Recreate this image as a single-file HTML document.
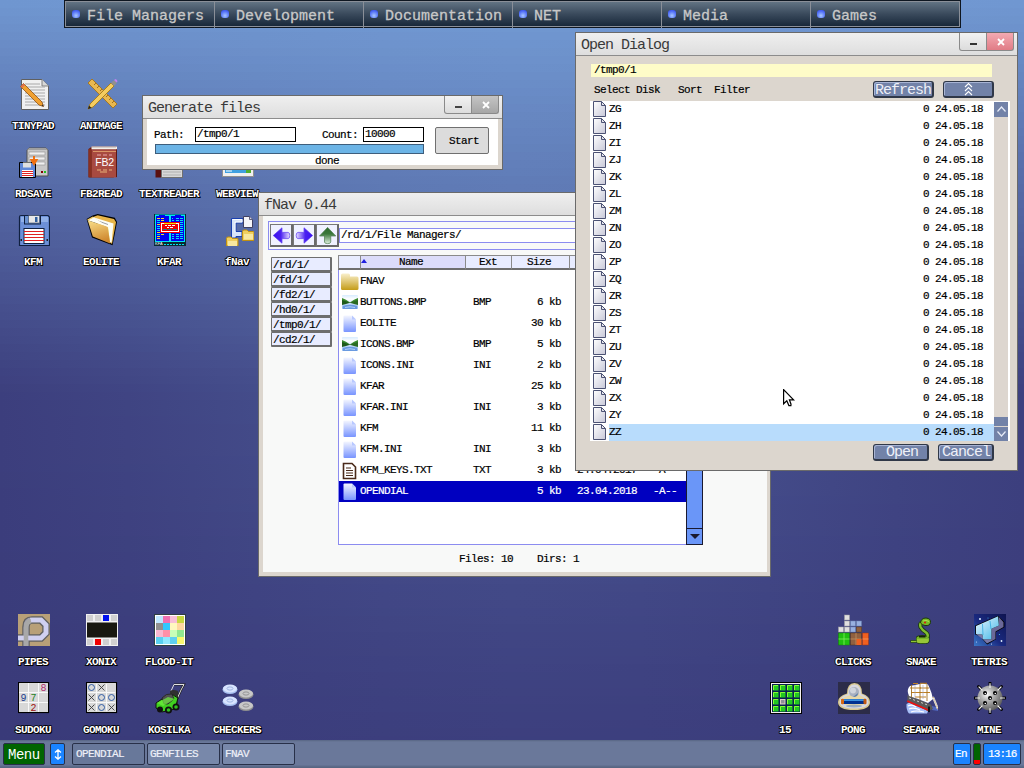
<!DOCTYPE html>
<html><head><meta charset="utf-8">
<style>
*{box-sizing:border-box;margin:0;padding:0}
html,body{width:1024px;height:768px;overflow:hidden}
body{position:relative;font-family:"Liberation Mono",monospace;background:linear-gradient(180deg,#6b90cb 0%,#5a74b4 35%,#46498c 70%,#3d3a7c 100%)}
.a{position:absolute}
/* top menu */
#topbar{left:64px;top:0;width:897px;height:28px;background:#1a2636;border:1px solid #0e1620}
#topbar .in{position:absolute;left:0;top:0;right:0;bottom:0;border:1px solid #8a8f98;background:linear-gradient(180deg,#627383 0%,#3a4a5c 50%,#18283a 100%)}
.sec{position:absolute;top:0;height:26px;border-left:1px solid #8a8f98}
.sec .dot{position:absolute;left:6px;top:8px;width:8px;height:8px;border-radius:3px;background:radial-gradient(circle at 50% 70%,#a8c8ff 0,#5a78f8 55%,#2a40e8 100%)}
.sec .t{position:absolute;left:21px;top:6px;font:15px "Liberation Mono",monospace;-webkit-text-stroke:0.3px #c8c8c8;color:#c8c8c8;letter-spacing:0px;white-space:pre}
/* labels */
.lbl{position:absolute;font:bold 11px "Liberation Mono",monospace;letter-spacing:-0.6px;color:#fff;-webkit-text-stroke:1.5px #000;paint-order:stroke fill;text-shadow:1px 1px 0 #000;white-space:pre;text-align:center;width:80px;line-height:12px}
.ico{position:absolute;width:32px;height:32px}
/* windows */
.win{position:absolute;background:#dcd6ce;border:1px solid #6a6a6a}
.ttl{position:absolute;left:0;top:0;right:0;height:23px;background:linear-gradient(180deg,#efefef,#dedede);border-bottom:1px solid #8c8c8c}
.ttl .t{position:absolute;left:5px;top:2px;font:15px "Liberation Mono",monospace;letter-spacing:-1px;color:#3a3a3a;white-space:pre}
.sys{font:11px "Liberation Mono",monospace;letter-spacing:-0.6px;-webkit-text-stroke:0.2px currentColor;white-space:pre;line-height:12px;color:#000}
/* taskbar */
#task{left:0;top:740px;width:1024px;height:28px;background:linear-gradient(180deg,#566484 0,#62708f 1px,#6a789a 2px,#6a789a 25px,#5e6c8c 26px,#56647f 28px)}
.tb{position:absolute;top:3px;height:22px;border:1px solid #283048;border-radius:2px}
.nb{position:absolute;width:23px;height:23px;background:#f0f2ff;border:1px solid #787878;border-right:2px solid #6a6a6a;border-bottom:2px solid #6a6a6a}
.db{position:absolute;left:12px;width:61px;height:15px;background:#e8ecff;border:1px solid #6e6e6e;border-bottom-width:2px;border-right-width:2px;border-radius:1px}
.hc{position:absolute;top:62px;height:15px;border:1px solid #8a8a8a;border-bottom:2px solid #6e6e6e;background:#e8ecff}
.ob{position:absolute;background:#7282a8;border:1px solid #303848;border-right-width:2px;border-bottom-width:2px;border-radius:3px;box-shadow:inset 1px 1px 0 #a8b4d4}
.bt{position:absolute;font:15px "Liberation Mono",monospace;letter-spacing:-1px;color:#eef0f8;white-space:pre;line-height:16px}
</style></head><body>

<div id="bg" style="position:absolute;left:0;top:0;width:1024px;height:768px">
<div style="height:8px;background:linear-gradient(90deg,#6f96d0 0px,#7097d1 128px,#7199d2 256px,#729ad4 384px,#739bd4 512px,#729bd4 640px,#729ad3 768px,#7198d2 896px,#7097d1 1023px)"></div>
<div style="height:8px;background:linear-gradient(90deg,#6e94ce 0px,#6f96cf 128px,#7097d1 256px,#7199d2 384px,#729ad3 512px,#7199d3 640px,#7198d2 768px,#7097d0 896px,#6f95cf 1023px)"></div>
<div style="height:8px;background:linear-gradient(90deg,#6d92cc 0px,#6e94ce 128px,#6f96cf 256px,#7097d1 384px,#7198d2 512px,#7198d1 640px,#7096d0 768px,#6f95cf 896px,#6e94cd 1023px)"></div>
<div style="height:8px;background:linear-gradient(90deg,#6c90ca 0px,#6d92cc 128px,#6e94ce 256px,#6f96d0 384px,#7097d0 512px,#7096d0 640px,#6f95cf 768px,#6e93cd 896px,#6d92cc 1023px)"></div>
<div style="height:8px;background:linear-gradient(90deg,#6b8ec8 0px,#6c90ca 128px,#6d92cc 256px,#6f94ce 384px,#6f95cf 512px,#6f95cf 640px,#6e93cd 768px,#6d91cb 896px,#6c90ca 1023px)"></div>
<div style="height:8px;background:linear-gradient(90deg,#6a8cc6 0px,#6b8ec9 128px,#6d91cb 256px,#6e93cd 384px,#6e94ce 512px,#6e93cd 640px,#6d92cc 768px,#6c90ca 896px,#6b8ec8 1023px)"></div>
<div style="height:8px;background:linear-gradient(90deg,#698ac4 0px,#6a8cc7 128px,#6c8fc9 256px,#6d92cb 384px,#6e93cc 512px,#6d92cc 640px,#6c90ca 768px,#6b8ec8 896px,#698cc6 1023px)"></div>
<div style="height:8px;background:linear-gradient(90deg,#6788c2 0px,#698ac5 128px,#6a8dc8 256px,#6c90ca 384px,#6d91cb 512px,#6c91cb 640px,#6b8fc9 768px,#6a8cc6 896px,#688ac4 1023px)"></div>
<div style="height:8px;background:linear-gradient(90deg,#6686c1 0px,#6888c3 128px,#698cc6 256px,#6b8ec9 384px,#6c90ca 512px,#6b8fc9 640px,#6a8dc7 768px,#688ac4 896px,#6788c2 1023px)"></div>
<div style="height:8px;background:linear-gradient(90deg,#6584bf 0px,#6687c1 128px,#688ac4 256px,#6a8dc7 384px,#6b8ec8 512px,#6b8ec8 640px,#698bc5 768px,#6788c2 896px,#6686c0 1023px)"></div>
<div style="height:8px;background:linear-gradient(90deg,#6482bd 0px,#6585bf 128px,#6788c3 256px,#698bc6 384px,#6a8dc7 512px,#6a8cc6 640px,#6889c4 768px,#6686c1 896px,#6583be 1023px)"></div>
<div style="height:8px;background:linear-gradient(90deg,#6380bb 0px,#6483be 128px,#6686c1 256px,#688ac4 384px,#698bc6 512px,#698ac5 640px,#6788c2 768px,#6584bf 896px,#6381bc 1023px)"></div>
<div style="height:8px;background:linear-gradient(90deg,#617eb9 0px,#6381bc 128px,#6585bf 256px,#6788c3 384px,#688ac4 512px,#6889c3 640px,#6686c1 768px,#6482bd 896px,#627fba 1023px)"></div>
<div style="height:8px;background:linear-gradient(90deg,#607cb7 0px,#627fba 128px,#6483be 256px,#6687c1 384px,#6888c3 512px,#6787c2 640px,#6584bf 768px,#6381bb 896px,#617eb9 1023px)"></div>
<div style="height:8px;background:linear-gradient(90deg,#5f7ab5 0px,#617db8 128px,#6381bc 256px,#6685c0 384px,#6787c1 512px,#6686c0 640px,#6483bd 768px,#627fba 896px,#607cb7 1023px)"></div>
<div style="height:8px;background:linear-gradient(90deg,#5e78b3 0px,#607bb7 128px,#6280bb 256px,#6584be 384px,#6686c0 512px,#6584bf 640px,#6381bc 768px,#617db8 896px,#5f7ab5 1023px)"></div>
<div style="height:8px;background:linear-gradient(90deg,#5d76b2 0px,#5f7ab5 128px,#617eb9 256px,#6482bd 384px,#6584bf 512px,#6483be 640px,#627fba 768px,#607bb6 896px,#5e78b3 1023px)"></div>
<div style="height:8px;background:linear-gradient(90deg,#5c74b0 0px,#5e78b3 128px,#617cb8 256px,#6381bc 384px,#6483be 512px,#6482bc 640px,#617eb9 768px,#5f79b5 896px,#5d76b1 1023px)"></div>
<div style="height:8px;background:linear-gradient(90deg,#5b72ae 0px,#5d76b2 128px,#607bb6 256px,#627fba 384px,#6382bc 512px,#6380bb 640px,#607cb7 768px,#5e78b3 896px,#5c74b0 1023px)"></div>
<div style="height:8px;background:linear-gradient(90deg,#5970ac 0px,#5c74b0 128px,#5f79b5 256px,#617eb9 384px,#6380bb 512px,#627fba 640px,#607bb6 768px,#5d76b2 896px,#5a72ae 1023px)"></div>
<div style="height:8px;background:linear-gradient(90deg,#586fab 0px,#5b73ae 128px,#5e78b3 256px,#617db8 384px,#627fba 512px,#617eb9 640px,#5f79b5 768px,#5c74b0 896px,#5970ac 1023px)"></div>
<div style="height:8px;background:linear-gradient(90deg,#576da9 0px,#5a71ad 128px,#5d76b2 256px,#607bb6 384px,#617eb9 512px,#607cb7 640px,#5e78b3 768px,#5b73ae 896px,#586eaa 1023px)"></div>
<div style="height:8px;background:linear-gradient(90deg,#566ba7 0px,#596fab 128px,#5c75b0 256px,#5f7ab5 384px,#607cb7 512px,#607bb6 640px,#5d76b2 768px,#5a71ad 896px,#576da9 1023px)"></div>
<div style="height:8px;background:linear-gradient(90deg,#5569a5 0px,#586daa 128px,#5b73af 256px,#5e79b4 384px,#607bb6 512px,#5f7ab5 640px,#5c75b0 768px,#596fab 896px,#566ba7 1023px)"></div>
<div style="height:8px;background:linear-gradient(90deg,#5467a4 0px,#576ca8 128px,#5a72ad 256px,#5d77b3 384px,#5f7ab5 512px,#5e78b4 640px,#5b73af 768px,#586eaa 896px,#5569a5 1023px)"></div>
<div style="height:8px;background:linear-gradient(90deg,#5365a2 0px,#566aa6 128px,#5970ac 256px,#5d76b1 384px,#5e79b4 512px,#5d77b2 640px,#5a72ae 768px,#576ca8 896px,#5467a4 1023px)"></div>
<div style="height:8px;background:linear-gradient(90deg,#5264a0 0px,#5568a5 128px,#586fab 256px,#5c75b0 384px,#5d77b3 512px,#5c76b1 640px,#5970ac 768px,#566aa7 896px,#5365a2 1023px)"></div>
<div style="height:8px;background:linear-gradient(90deg,#51629f 0px,#5467a3 128px,#586da9 256px,#5b73af 384px,#5d76b2 512px,#5c74b0 640px,#596fab 768px,#5569a5 896px,#5264a0 1023px)"></div>
<div style="height:8px;background:linear-gradient(90deg,#50609d 0px,#5365a2 128px,#576ca8 256px,#5a72ae 384px,#5c75b0 512px,#5b73af 640px,#586da9 768px,#5467a3 896px,#51629f 1023px)"></div>
<div style="height:8px;background:linear-gradient(90deg,#4f5e9b 0px,#5264a0 128px,#566aa6 256px,#5970ac 384px,#5b73af 512px,#5a72ad 640px,#576ca8 768px,#5365a2 896px,#50609d 1023px)"></div>
<div style="height:8px;background:linear-gradient(90deg,#4e5d9a 0px,#51629f 128px,#5569a5 256px,#596fab 384px,#5a72ae 512px,#5970ac 640px,#566aa7 768px,#5264a0 896px,#4f5f9b 1023px)"></div>
<div style="height:8px;background:linear-gradient(90deg,#4d5b98 0px,#50609d 128px,#5467a4 256px,#586eaa 384px,#5a71ad 512px,#586fab 640px,#5569a5 768px,#51629f 896px,#4e5d9a 1023px)"></div>
<div style="height:8px;background:linear-gradient(90deg,#4c5997 0px,#4f5f9c 128px,#5366a2 256px,#576ca8 384px,#596fab 512px,#586daa 640px,#5468a4 768px,#50619d 896px,#4d5b98 1023px)"></div>
<div style="height:8px;background:linear-gradient(90deg,#4b5895 0px,#4e5d9a 128px,#5264a1 256px,#566ba7 384px,#586eaa 512px,#576ca8 640px,#5366a2 768px,#4f5f9c 896px,#4c5997 1023px)"></div>
<div style="height:8px;background:linear-gradient(90deg,#4a5693 0px,#4d5b99 128px,#51639f 256px,#5569a6 384px,#576da9 512px,#566ba7 640px,#5265a1 768px,#4e5d9a 896px,#4b5895 1023px)"></div>
<div style="height:8px;background:linear-gradient(90deg,#495492 0px,#4c5a97 128px,#50619e 256px,#5468a4 384px,#566ba7 512px,#5569a6 640px,#5263a0 768px,#4d5c99 896px,#4a5693 1023px)"></div>
<div style="height:8px;background:linear-gradient(90deg,#485390 0px,#4b5895 128px,#50609c 256px,#5467a3 384px,#566aa6 512px,#5468a4 640px,#51619e 768px,#4c5a97 896px,#495492 1023px)"></div>
<div style="height:8px;background:linear-gradient(90deg,#47518f 0px,#4a5794 128px,#4f5e9b 256px,#5365a2 384px,#5568a5 512px,#5366a3 640px,#50609d 768px,#4b5996 896px,#485390 1023px)"></div>
<div style="height:8px;background:linear-gradient(90deg,#464f8d 0px,#495592 128px,#4e5c99 256px,#5264a0 384px,#5467a3 512px,#5365a1 640px,#4f5e9b 768px,#4a5794 896px,#47518f 1023px)"></div>
<div style="height:8px;background:linear-gradient(90deg,#454e8c 0px,#485391 128px,#4d5b98 256px,#51629f 384px,#5365a2 512px,#5263a0 640px,#4e5d9a 768px,#495593 896px,#464f8d 1023px)"></div>
<div style="height:8px;background:linear-gradient(90deg,#444c8a 0px,#47528f 128px,#4c5996 256px,#50609d 384px,#5264a0 512px,#51629e 640px,#4d5b98 768px,#495491 896px,#454e8c 1023px)"></div>
<div style="height:8px;background:linear-gradient(90deg,#434a88 0px,#46508e 128px,#4b5895 256px,#4f5f9c 384px,#51629f 512px,#50609d 640px,#4c5a97 768px,#485290 896px,#444c8a 1023px)"></div>
<div style="height:8px;background:linear-gradient(90deg,#424987 0px,#454e8c 128px,#4a5693 256px,#4e5d9a 384px,#50619d 512px,#4f5e9b 640px,#4b5895 768px,#47508e 896px,#434b89 1023px)"></div>
<div style="height:8px;background:linear-gradient(90deg,#414785 0px,#444d8b 128px,#495492 256px,#4d5c99 384px,#4f5f9c 512px,#4e5d9a 640px,#4a5694 768px,#464f8d 896px,#424987 1023px)"></div>
<div style="height:8px;background:linear-gradient(90deg,#404684 0px,#444b89 128px,#485390 256px,#4c5a97 384px,#4e5d9a 512px,#4d5b98 640px,#495592 768px,#454d8b 896px,#414786 1023px)"></div>
<div style="height:8px;background:linear-gradient(90deg,#3f4482 0px,#434a88 128px,#47518f 256px,#4b5895 384px,#4d5c99 512px,#4c5997 640px,#485391 768px,#444c8a 896px,#404684 1023px)"></div>
<div style="height:8px;background:linear-gradient(90deg,#3e4281 0px,#424886 128px,#464f8d 256px,#4a5794 384px,#4c5a97 512px,#4b5895 640px,#47518f 768px,#434a88 896px,#3f4483 1023px)"></div>
<div style="height:8px;background:linear-gradient(90deg,#3e4180 0px,#414785 128px,#454e8c 256px,#495592 384px,#4b5896 512px,#4a5694 640px,#46508e 768px,#424887 896px,#3f4381 1023px)"></div>
<div style="height:8px;background:linear-gradient(90deg,#3d407e 0px,#404584 128px,#444d8b 256px,#485491 384px,#4a5794 512px,#495592 640px,#454e8c 768px,#414785 896px,#3e4180 1023px)"></div>
<div style="height:8px;background:linear-gradient(90deg,#3c3f7e 0px,#404483 128px,#444c8a 256px,#485390 384px,#4a5693 512px,#495491 640px,#454d8b 768px,#414685 896px,#3d417f 1023px)"></div>
<div style="height:8px;background:linear-gradient(90deg,#3c3e7d 0px,#3f4482 128px,#434b89 256px,#475290 384px,#495593 512px,#485391 640px,#444d8b 768px,#404684 896px,#3d407f 1023px)"></div>
<div style="height:8px;background:linear-gradient(90deg,#3c3e7d 0px,#3f4482 128px,#434b89 256px,#47528f 384px,#495592 512px,#485390 640px,#444d8a 768px,#404584 896px,#3d407f 1023px)"></div>
<div style="height:8px;background:linear-gradient(90deg,#3c3e7d 0px,#3f4382 128px,#434b89 256px,#47518f 384px,#495492 512px,#485290 640px,#444c8a 768px,#404584 896px,#3d407e 1023px)"></div>
<div style="height:8px;background:linear-gradient(90deg,#3c3e7d 0px,#3f4382 128px,#434a88 256px,#47518f 384px,#495492 512px,#485290 640px,#444c8a 768px,#404584 896px,#3d407e 1023px)"></div>
<div style="height:8px;background:linear-gradient(90deg,#3c3e7d 0px,#3f4382 128px,#434a88 256px,#47518e 384px,#495491 512px,#475290 640px,#444c8a 768px,#404583 896px,#3d407e 1023px)"></div>
<div style="height:8px;background:linear-gradient(90deg,#3c3e7d 0px,#3f4382 128px,#434a88 256px,#47508e 384px,#485491 512px,#47528f 640px,#444c8a 768px,#404583 896px,#3d407e 1023px)"></div>
<div style="height:8px;background:linear-gradient(90deg,#3c3e7d 0px,#3f4381 128px,#434a88 256px,#46508e 384px,#485391 512px,#47518f 640px,#444b89 768px,#404583 896px,#3d3f7e 1023px)"></div>
<div style="height:8px;background:linear-gradient(90deg,#3c3e7d 0px,#3f4381 128px,#424988 256px,#46508e 384px,#485390 512px,#47518f 640px,#434b89 768px,#404583 896px,#3d3f7e 1023px)"></div>
<div style="height:8px;background:linear-gradient(90deg,#3c3e7d 0px,#3e4381 128px,#424987 256px,#464f8d 384px,#485290 512px,#47508e 640px,#434b89 768px,#404483 896px,#3d3f7e 1023px)"></div>
<div style="height:8px;background:linear-gradient(90deg,#3c3e7c 0px,#3e4281 128px,#424987 256px,#464f8d 384px,#475290 512px,#46508e 640px,#434b89 768px,#3f4483 896px,#3c3f7e 1023px)"></div>
<div style="height:8px;background:linear-gradient(90deg,#3b3e7c 0px,#3e4281 128px,#424987 256px,#454f8c 384px,#47518f 512px,#46508d 640px,#434a88 768px,#3f4482 896px,#3c3f7e 1023px)"></div>
<div style="height:8px;background:linear-gradient(90deg,#3b3d7c 0px,#3e4281 128px,#424886 256px,#454e8c 384px,#47518f 512px,#464f8d 640px,#434a88 768px,#3f4482 896px,#3c3f7e 1023px)"></div>
<div style="height:8px;background:linear-gradient(90deg,#3b3d7c 0px,#3e4280 128px,#424886 256px,#454e8b 384px,#47508e 512px,#464f8c 640px,#424988 768px,#3f4482 896px,#3c3f7e 1023px)"></div>
<div style="height:8px;background:linear-gradient(90deg,#3b3d7c 0px,#3e4280 128px,#414886 256px,#454d8b 384px,#46508d 512px,#454e8c 640px,#424987 768px,#3f4382 896px,#3c3f7e 1023px)"></div>
<div style="height:8px;background:linear-gradient(90deg,#3b3d7c 0px,#3e4180 128px,#414785 256px,#444d8a 384px,#464f8d 512px,#454d8b 640px,#424987 768px,#3f4382 896px,#3c3f7d 1023px)"></div>
<div style="height:8px;background:linear-gradient(90deg,#3b3d7c 0px,#3e4180 128px,#414785 256px,#444c8a 384px,#454e8c 512px,#454d8b 640px,#424886 768px,#3f4381 896px,#3c3f7d 1023px)"></div>
<div style="height:8px;background:linear-gradient(90deg,#3b3d7c 0px,#3e4180 128px,#414685 256px,#444b89 384px,#454e8c 512px,#444c8a 640px,#424886 768px,#3e4381 896px,#3c3e7d 1023px)"></div>
<div style="height:8px;background:linear-gradient(90deg,#3b3d7c 0px,#3d417f 128px,#404684 256px,#434b89 384px,#454d8b 512px,#444c8a 640px,#414786 768px,#3e4281 896px,#3c3e7d 1023px)"></div>
<div style="height:8px;background:linear-gradient(90deg,#3b3d7c 0px,#3d417f 128px,#404684 256px,#434a88 384px,#444d8b 512px,#434b89 640px,#414785 768px,#3e4281 896px,#3c3e7d 1023px)"></div>
<div style="height:8px;background:linear-gradient(90deg,#3b3d7b 0px,#3d407f 128px,#404584 256px,#434a88 384px,#444c8a 512px,#434b89 640px,#414685 768px,#3e4280 896px,#3c3e7d 1023px)"></div>
<div style="height:8px;background:linear-gradient(90deg,#3b3c7b 0px,#3d407f 128px,#404583 256px,#424987 384px,#444b89 512px,#434a88 640px,#404684 768px,#3e4180 896px,#3c3e7d 1023px)"></div>
<div style="height:8px;background:linear-gradient(90deg,#3b3c7b 0px,#3d407f 128px,#3f4483 256px,#424987 384px,#434b89 512px,#424987 640px,#404684 768px,#3e4180 896px,#3c3e7d 1023px)"></div>
<div style="height:8px;background:linear-gradient(90deg,#3b3c7b 0px,#3d407e 128px,#3f4482 256px,#424886 384px,#434a88 512px,#424987 640px,#404584 768px,#3d4180 896px,#3c3e7c 1023px)"></div>
<div style="height:8px;background:linear-gradient(90deg,#3b3c7b 0px,#3d3f7e 128px,#3f4382 256px,#414786 384px,#424987 512px,#424886 640px,#404583 768px,#3d417f 896px,#3b3d7c 1023px)"></div>
<div style="height:8px;background:linear-gradient(90deg,#3b3c7b 0px,#3c3f7e 128px,#3f4382 256px,#414785 384px,#424987 512px,#414786 640px,#3f4483 768px,#3d407f 896px,#3b3d7c 1023px)"></div>
<div style="height:8px;background:linear-gradient(90deg,#3a3c7b 0px,#3c3f7e 128px,#3e4381 256px,#414685 384px,#424886 512px,#414785 640px,#3f4482 768px,#3d407f 896px,#3b3d7c 1023px)"></div>
<div style="height:8px;background:linear-gradient(90deg,#3a3c7b 0px,#3c3f7d 128px,#3e4281 256px,#404684 384px,#414786 512px,#414685 640px,#3f4382 768px,#3d407f 896px,#3b3d7c 1023px)"></div>
<div style="height:8px;background:linear-gradient(90deg,#3a3c7b 0px,#3c3e7d 128px,#3e4280 256px,#404583 384px,#414785 512px,#404684 640px,#3f4381 768px,#3d407e 896px,#3b3d7c 1023px)"></div>
<div style="height:8px;background:linear-gradient(90deg,#3a3b7a 0px,#3c3e7d 128px,#3e4180 256px,#404583 384px,#404684 512px,#404584 640px,#3e4281 768px,#3d3f7e 896px,#3b3d7c 1023px)"></div>
<div style="height:8px;background:linear-gradient(90deg,#3a3b7a 0px,#3c3e7d 128px,#3e4180 256px,#3f4482 384px,#404584 512px,#404583 640px,#3e4281 768px,#3c3f7e 896px,#3b3d7c 1023px)"></div>
<div style="height:8px;background:linear-gradient(90deg,#3a3b7a 0px,#3c3e7c 128px,#3d417f 256px,#3f4382 384px,#404583 512px,#3f4483 640px,#3e4280 768px,#3c3f7e 896px,#3b3c7b 1023px)"></div>
<div style="height:8px;background:linear-gradient(90deg,#3a3b7a 0px,#3b3d7c 128px,#3d407f 256px,#3f4381 384px,#3f4483 512px,#3f4482 640px,#3e4180 768px,#3c3f7d 896px,#3b3c7b 1023px)"></div>
<div style="height:8px;background:linear-gradient(90deg,#3a3b7a 0px,#3b3d7c 128px,#3d407f 256px,#3e4281 384px,#3f4482 512px,#3f4382 640px,#3d4180 768px,#3c3e7d 896px,#3b3c7b 1023px)"></div>
<div style="height:8px;background:linear-gradient(90deg,#3a3b7a 0px,#3b3d7c 128px,#3d407e 256px,#3e4281 384px,#3f4382 512px,#3e4281 640px,#3d407f 768px,#3c3e7d 896px,#3b3c7b 1023px)"></div>
<div style="height:8px;background:linear-gradient(90deg,#3a3b7a 0px,#3b3d7c 128px,#3c3f7e 256px,#3e4180 384px,#3e4381 512px,#3e4281 640px,#3d407f 768px,#3c3e7d 896px,#3b3c7b 1023px)"></div>
<div style="height:8px;background:linear-gradient(90deg,#3a3b7a 0px,#3b3d7c 128px,#3c3f7e 256px,#3e4180 384px,#3e4281 512px,#3e4280 640px,#3d407e 768px,#3c3e7c 896px,#3b3c7b 1023px)"></div>
<div style="height:8px;background:linear-gradient(90deg,#3a3b7a 0px,#3b3c7b 128px,#3c3f7d 256px,#3d417f 384px,#3e4280 512px,#3e4180 640px,#3d3f7e 768px,#3b3d7c 896px,#3a3c7b 1023px)"></div>
<div style="height:8px;background:linear-gradient(90deg,#3a3a7a 0px,#3b3c7b 128px,#3c3e7d 256px,#3d407f 384px,#3e4180 512px,#3d417f 640px,#3c3f7e 768px,#3b3d7c 896px,#3a3c7b 1023px)"></div>
<div style="height:8px;background:linear-gradient(90deg,#3a3a79 0px,#3b3c7b 128px,#3c3e7d 256px,#3d407f 384px,#3d417f 512px,#3d407f 640px,#3c3f7e 768px,#3b3d7c 896px,#3a3c7b 1023px)"></div>
<div style="height:8px;background:linear-gradient(90deg,#3a3a79 0px,#3b3c7b 128px,#3c3e7d 256px,#3d3f7e 384px,#3d407f 512px,#3d407f 640px,#3c3e7d 768px,#3b3d7c 896px,#3a3b7a 1023px)"></div>
<div style="height:8px;background:linear-gradient(90deg,#3a3a79 0px,#3a3c7b 128px,#3b3d7c 256px,#3c3f7e 384px,#3d407f 512px,#3d3f7e 640px,#3c3e7d 768px,#3b3d7c 896px,#3a3b7a 1023px)"></div>
<div style="height:8px;background:linear-gradient(90deg,#393a79 0px,#3a3c7b 128px,#3b3d7c 256px,#3c3f7d 384px,#3d3f7e 512px,#3c3f7e 640px,#3c3e7d 768px,#3b3c7b 896px,#3a3b7a 1023px)"></div>
<div style="height:8px;background:linear-gradient(90deg,#393a79 0px,#3a3b7a 128px,#3b3d7c 256px,#3c3e7d 384px,#3c3f7e 512px,#3c3f7e 640px,#3c3e7c 768px,#3b3c7b 896px,#3a3b7a 1023px)"></div>
<div style="height:8px;background:linear-gradient(90deg,#393a79 0px,#3a3b7a 128px,#3b3d7c 256px,#3c3e7d 384px,#3c3f7d 512px,#3c3e7d 640px,#3b3d7c 768px,#3b3c7b 896px,#3a3b7a 1023px)"></div>
<div style="height:8px;background:linear-gradient(90deg,#393a79 0px,#3a3b7a 128px,#3b3d7b 256px,#3c3e7d 384px,#3c3e7d 512px,#3c3e7d 640px,#3b3d7c 768px,#3b3c7b 896px,#3a3b7a 1023px)"></div>
<div style="height:8px;background:linear-gradient(90deg,#393a79 0px,#3a3b7a 128px,#3b3c7b 256px,#3b3d7c 384px,#3c3e7d 512px,#3c3e7d 640px,#3b3d7c 768px,#3b3c7b 896px,#3a3b7a 1023px)"></div>
</div>
<svg width="0" height="0" style="position:absolute"><defs>
<linearGradient id="gd" x1="0" y1="0" x2="0" y2="1"><stop offset="0" stop-color="#faf0cc"/><stop offset="1" stop-color="#c49c18"/></linearGradient>
<linearGradient id="gb" x1="0" y1="0" x2="0" y2="1"><stop offset="0" stop-color="#d8ecff"/><stop offset="0.3" stop-color="#ffffff"/><stop offset="1" stop-color="#80b0f0"/></linearGradient>
<linearGradient id="gf" x1="0" y1="0" x2="0" y2="1"><stop offset="0" stop-color="#f4f6ff"/><stop offset="1" stop-color="#7894ff"/></linearGradient>
<linearGradient id="gp" x1="0" y1="0" x2="1" y2="1"><stop offset="0" stop-color="#ffffff"/><stop offset="1" stop-color="#c8c8d8"/></linearGradient>
</defs></svg>
<div id="topbar" class="a"><div class="in">
 <div class="sec" style="left:-1px;width:149px;border-left:none"><div class="dot" style="left:7px"></div><div class="t" style="left:22px">File Managers</div></div>
 <div class="sec" style="left:148px;width:149px"><div class="dot"></div><div class="t">Development</div></div>
 <div class="sec" style="left:297px;width:149px"><div class="dot"></div><div class="t">Documentation</div></div>
 <div class="sec" style="left:446px;width:149px"><div class="dot"></div><div class="t">NET</div></div>
 <div class="sec" style="left:595px;width:149px"><div class="dot"></div><div class="t">Media</div></div>
 <div class="sec" style="left:744px;width:149px"><div class="dot"></div><div class="t">Games</div></div>
</div></div>

<!-- ICONS -->
<div id="icons">
<svg class="ico" style="left:18px;top:78px" width="32" height="32" viewBox="0 0 32 32"><path d="M3.5 1.5H24L30.5 8V31.5H3.5Z" fill="#f0f0f0" stroke="#606060"/><path d="M24 1.5V8H30.5" fill="#d8d8d8" stroke="#808080"/>
<path d="M7 6H22M7 9H27M7 12H27M7 15H27M7 18H27M7 21H27M7 24H27M7 27H27" stroke="#a8a8a8" stroke-width="1"/>
<path d="M2.5 8.5L5.5 5.5L24 24L25.5 28.5L21 27Z" fill="#f0a030" stroke="#905010" stroke-width="0.8"/><path d="M2.5 8.5L5.5 5.5L7 7L4 10Z" fill="#e07050"/><path d="M23.5 27.8L25.5 28.5L24.8 26.5Z" fill="#303030"/></svg>
<div class="lbl" style="left:-7px;top:120px">TINYPAD</div>
<svg class="ico" style="left:86px;top:78px" width="32" height="32" viewBox="0 0 32 32"><path d="M2 5L6 1L31 26L27 30Z" fill="#e8b850" stroke="#a87820" stroke-width="1"/>
<path d="M8 7L10 5M11 10L13 8M14 13L16 11M20 19L22 17M23 22L25 20M26 25L28 23" stroke="#a07020" stroke-width="1"/>
<path d="M4 26L25 5L28 8L7 29L2 31Z" fill="#f4cc60" stroke="#a88020" stroke-width="1"/><path d="M25 5L27 3Q28.5 2 30 3.5Q31 5 30 6L28 8Z" fill="#909090"/><path d="M28 2L30.5 4.5L31.5 3.5Q31.5 1.5 29.5 1Z" fill="#c080f0"/><path d="M2 31L3 27.5L5.5 30Z" fill="#202020"/></svg>
<div class="lbl" style="left:61px;top:120px">ANIMAGE</div>
<svg class="ico" style="left:18px;top:146px" width="32" height="32" viewBox="0 0 32 32"><path d="M11 2H28L30 4V30H9V4Z" fill="#c8c8c8" stroke="#505050"/><path d="M11 2H28L30 4H9Z" fill="#a0a0a0"/>
<rect x="11" y="6" width="16" height="3" fill="#f0f0f0" stroke="#909090" stroke-width="0.6"/><rect x="11" y="11" width="16" height="3" fill="#f0f0f0" stroke="#909090" stroke-width="0.6"/><rect x="11" y="16" width="16" height="3" fill="#f0f0f0" stroke="#909090" stroke-width="0.6"/>
<rect x="23" y="25" width="2" height="2" fill="#800000"/><rect x="26" y="25" width="2" height="2" fill="#20c020"/>
<path d="M1.5 16.5H16L17.5 18V31.5H1.5Z" fill="#6088d8" stroke="#000"/><rect x="5" y="16.5" width="8" height="5" fill="#e0e0e0"/><rect x="4" y="24" width="11" height="7" fill="#fff"/><path d="M4 25.5H15M4 27.5H15M4 29.5H15" stroke="#e02020" stroke-width="1"/>
<path d="M16 10V16M13.5 14L16 18L18.5 14Z" stroke="#f07010" stroke-width="2" fill="#f0a020"/></svg>
<div class="lbl" style="left:-7px;top:188px">RDSAVE</div>
<svg class="ico" style="left:86px;top:146px" width="32" height="32" viewBox="0 0 32 32"><path d="M2.5 3L6 0.5H31V28.5L27.5 31.5H2.5Z" fill="#6a2018"/><path d="M5.5 0.5H31V3.5H5.5Z" fill="#f4f0ec"/><path d="M6 1.5H30" stroke="#c0b8b0" stroke-width="0.6"/>
<rect x="5.5" y="3.5" width="25.5" height="28" fill="#a84a40"/><path d="M2.5 3L5.5 3.5V31.5L2.5 31Z" fill="#8a3020"/><path d="M30.5 3.5V31" stroke="#601810" stroke-width="1"/><path d="M7 5.5H30" stroke="#e8a870" stroke-width="0.8"/>
<path d="M11 9H15M17 9H21M23 9H26" stroke="#f0b0b8" stroke-width="0.9"/><text x="18.5" y="20" font-family="Liberation Sans" font-size="10.5" fill="#fff" text-anchor="middle" letter-spacing="-0.3">FB2</text><path d="M11 24H15M17 24H21M23 24H26M14 26H21" stroke="#f0c080" stroke-width="0.9"/></svg>
<div class="lbl" style="left:61px;top:188px">FB2READ</div>
<svg class="ico" style="left:154px;top:146px" width="32" height="32" viewBox="0 0 32 32"><rect x="1.5" y="2" width="6" height="29.5" fill="#5a1010"/><rect x="7.5" y="2" width="21" height="29.5" fill="#d8d8d8" stroke="#707070"/><path d="M9 26H27M9 29H27" stroke="#b0b0b0"/></svg>
<div class="lbl" style="left:129px;top:188px">TEXTREADER</div>
<svg class="ico" style="left:222px;top:146px" width="32" height="32" viewBox="0 0 32 32"><rect x="0.5" y="1" width="31" height="29.5" fill="#f0f0f0" stroke="#909090"/><rect x="3" y="3" width="26" height="24" fill="#3a9ad8"/><rect x="3" y="21" width="26" height="6" fill="#40a0e0"/><rect x="4" y="23" width="6" height="3" fill="#a0d0f0"/><rect x="24" y="23" width="5" height="4" fill="#50b030"/></svg>
<div class="lbl" style="left:197px;top:188px">WEBVIEW</div>
<svg class="ico" style="left:18px;top:214px" width="32" height="32" viewBox="0 0 32 32"><path d="M1.5 3Q1.5 1.5 3 1.5H30L31.5 3V31.5H1.5Z" fill="#6c90d8" stroke="#102040" stroke-width="1.2"/><path d="M3 3H30V8H3Z" fill="#90b0e8"/>
<rect x="6.5" y="1.5" width="16" height="8.5" fill="#6890d0" stroke="#102040"/><rect x="10.5" y="1.5" width="11" height="7.5" fill="#e8e8e8" stroke="#304060" stroke-width="0.6"/><rect x="17" y="3" width="2.5" height="5" fill="#3060a0"/>
<rect x="6" y="14.5" width="20" height="15" fill="#fff" stroke="#102040"/><path d="M6 17.5H26M6 20.5H26M6 23.5H26M6 26.5H26" stroke="#e02020" stroke-width="1.2"/><rect x="2.5" y="25" width="1.5" height="2" fill="#202020"/><rect x="28.5" y="25" width="1.5" height="2" fill="#202020"/></svg>
<div class="lbl" style="left:-7px;top:256px">KFM</div>
<svg class="ico" style="left:86px;top:214px" width="32" height="32" viewBox="0 0 32 32"><defs><linearGradient id="eg" x1="0" y1="0" x2="0.3" y2="1"><stop offset="0" stop-color="#fae08a"/><stop offset="1" stop-color="#d08a30"/></linearGradient></defs>
<path d="M0.6 5L6.6 1.6L11.6 0.1L28.8 3.8L31 8L26.6 31.2L6 23.6Z" fill="#000"/>
<path d="M7 3L11.6 1.3L28 5L30 8.2L26 30L23.5 28Z" fill="#e8b448"/>
<path d="M7.4 3.2L27.5 9.6L25.6 28.5L22.8 28L21 13Z" fill="#fdfdf4"/><path d="M21.5 13.5L23.5 28.5" stroke="#e8f080" stroke-width="1.2"/><path d="M8 5.5L22 10.5" stroke="#505870" stroke-width="0.6"/>
<path d="M1.6 6.2L7.4 3.1L22 13Z" fill="#fdfdf4"/><path d="M1.2 5.4L6.8 2.4L7.8 3.5L2 6.6Z" fill="#f4cc68"/><path d="M1.7 6.2L21.8 13L24.2 29.4L6.8 22.6Z" fill="url(#eg)"/></svg>
<div class="lbl" style="left:61px;top:256px">EOLITE</div>
<svg class="ico" style="left:154px;top:214px" width="32" height="32" viewBox="0 0 32 32"><rect x="0" y="0" width="32" height="32" fill="#0a2a30"/><rect x="1" y="0.5" width="30" height="27.5" fill="#00e8f0"/><rect x="2" y="2" width="13" height="25" fill="#0000f0"/><rect x="17" y="2" width="13" height="25" fill="#0000f0"/><rect x="5" y="1" width="6" height="1" fill="#0000f0"/><rect x="21" y="1" width="6" height="1" fill="#0000f0"/><rect x="3" y="4" width="3" height="1" fill="#f0e020"/><rect x="3" y="6" width="3" height="1" fill="#00e0f0"/><rect x="3" y="8" width="3" height="1" fill="#00e0f0"/><rect x="3" y="10" width="3" height="1" fill="#f0e020"/><rect x="3" y="12" width="3" height="1" fill="#00e0f0"/><rect x="3" y="14" width="3" height="1" fill="#00e0f0"/><rect x="3" y="16" width="3" height="1" fill="#00e0f0"/><rect x="3" y="18" width="3" height="1" fill="#f0e020"/><rect x="3" y="20" width="3" height="1" fill="#00e0f0"/><rect x="3" y="22" width="3" height="1" fill="#f0e020"/><rect x="3" y="24" width="3" height="1" fill="#f0e020"/><rect x="7" y="4" width="3" height="1" fill="#f0e020"/><rect x="7" y="6" width="3" height="1" fill="#f0e020"/><rect x="7" y="20" width="3" height="1" fill="#f0e020"/><rect x="18" y="4" width="1" height="1" fill="#00e0f0"/><rect x="22" y="4" width="3" height="1" fill="#00e0f0"/><rect x="26" y="4" width="3" height="1" fill="#00e0f0"/><rect x="18" y="6" width="2" height="1" fill="#00e0f0"/><rect x="22" y="6" width="3" height="1" fill="#00e0f0"/><rect x="26" y="6" width="3" height="1" fill="#00e0f0"/><rect x="26" y="8" width="3" height="1" fill="#00e0f0"/><rect x="26" y="10" width="3" height="1" fill="#00e0f0"/><rect x="26" y="12" width="3" height="1" fill="#00e0f0"/><rect x="26" y="14" width="3" height="1" fill="#00e0f0"/><rect x="26" y="16" width="3" height="1" fill="#00e0f0"/><rect x="26" y="18" width="3" height="1" fill="#00e0f0"/><rect x="18" y="20" width="2" height="1" fill="#00e0f0"/><rect x="22" y="20" width="3" height="1" fill="#00e0f0"/><rect x="26" y="20" width="3" height="1" fill="#00e0f0"/><rect x="18" y="22" width="2" height="1" fill="#00e0f0"/><rect x="22" y="22" width="3" height="1" fill="#00e0f0"/><rect x="26" y="22" width="3" height="1" fill="#00e0f0"/><rect x="18" y="24" width="2" height="1" fill="#00e0f0"/><rect x="22" y="24" width="3" height="1" fill="#00e0f0"/><rect x="26" y="24" width="3" height="1" fill="#00e0f0"/><rect x="6" y="8" width="20" height="11" fill="#f00000"/><rect x="7.5" y="9.5" width="17" height="8" fill="none" stroke="#fff" stroke-width="1"/><rect x="10" y="9" width="12" height="1" fill="#f0e000"/><rect x="11" y="11" width="2" height="1" fill="#fff"/><rect x="14" y="11" width="3" height="1" fill="#fff"/><rect x="18" y="11" width="3" height="1" fill="#fff"/><rect x="13" y="13" width="2" height="1" fill="#fff"/><rect x="16" y="13" width="3" height="1" fill="#fff"/><rect x="9" y="15" width="4" height="1" fill="#208080"/><rect x="14" y="15" width="4" height="1" fill="#208080"/><rect x="19" y="15" width="4" height="1" fill="#208080"/><rect x="1" y="28" width="7" height="3" fill="#0a2a30"/><text x="1" y="31" font-family="Liberation Sans" font-size="4" fill="#fff">KFA</text><rect x="10" y="30" width="2" height="1" fill="#00e0f0"/><rect x="13" y="30" width="2" height="1" fill="#00e0f0"/><rect x="16" y="30" width="2" height="1" fill="#00e0f0"/><rect x="19" y="30" width="2" height="1" fill="#00e0f0"/><rect x="22" y="30" width="2" height="1" fill="#00e0f0"/><rect x="25" y="30" width="2" height="1" fill="#00e0f0"/><rect x="28" y="30" width="2" height="1" fill="#00e0f0"/></svg>
<div class="lbl" style="left:129px;top:256px">KFAR</div>
<svg class="ico" style="left:222px;top:214px" width="32" height="32" viewBox="0 0 32 32"><path d="M9.5 4.5H21V9H14V17.5H20V22.5H14V24H9.5Z" fill="#d8e4f8" stroke="#1a40b0" stroke-width="1"/><path d="M10.5 5.5H20V8H13V18.5" fill="none" stroke="#ffffff" stroke-width="1" opacity="0.8"/>
<path d="M21.5 2.5H27.5L30.5 5.5V13.5H21.5Z" fill="#f4f4f8" stroke="#404060" stroke-width="1"/><path d="M27.5 2.5V5.5H30.5" fill="#d0d0e0" stroke="#404060" stroke-width="0.8"/>
<path d="M4.5 24.5Q4.5 23 6 23H9L10.5 24.5H15Q16 24.5 16 25.5V32H4.5Z" fill="#f0d060" stroke="#c09010" stroke-width="1"/><rect x="6" y="27" width="9" height="5" fill="#f8e8a0"/>
<path d="M20.5 17.5Q20.5 16 22 16H25L26.5 17.5H31Q32 17.5 32 18.5V26.5H20.5Z" fill="#f0d060" stroke="#c09010" stroke-width="1"/><rect x="22" y="20" width="9" height="5.5" fill="#f8e8a0"/></svg>
<div class="lbl" style="left:197px;top:256px">fNav</div>
<svg class="ico" style="left:18px;top:614px" width="32" height="32" viewBox="0 0 32 32"><rect x="0" y="0" width="32" height="32" fill="#b8a078"/><path d="M8 32V13Q8 6 14 6H23L28 11V19L23 24H0" fill="none" stroke="#606060" stroke-width="7.5"/><path d="M8 32V13Q8 6 14 6H23L28 11V19L23 24H0" fill="none" stroke="#a0a0b0" stroke-width="5"/>
<path d="M12 6H23L28 11V19L23 24H0" fill="none" stroke="#d0d0f0" stroke-width="4.5"/><path d="M8 32V14Q8 8 13 7" fill="none" stroke="#a8a8a8" stroke-width="4.5"/><rect x="12" y="12" width="10" height="8" fill="#b8a078"/></svg>
<div class="lbl" style="left:-7px;top:656px">PIPES</div>
<svg class="ico" style="left:86px;top:614px" width="32" height="32" viewBox="0 0 32 32"><rect x="0" y="0" width="32" height="32" fill="#f0f0f0"/><path d="M1 1H7V7H1ZM9 1H15V7H9ZM25 1H31V7H25ZM1 25H7V31H1ZM17 25H23V31H17ZM25 25H31V31H25Z" fill="#d0d0d0"/><rect x="17" y="1" width="6" height="6" fill="#0010f0"/><rect x="9" y="25" width="6" height="6" fill="#f00000"/><rect x="1" y="8.5" width="30" height="15" fill="#181810"/></svg>
<div class="lbl" style="left:61px;top:656px">XONIX</div>
<svg class="ico" style="left:154px;top:614px" width="32" height="32" viewBox="0 0 32 32"><rect x="0.5" y="0.5" width="31" height="31" fill="#fff" stroke="#304040"/>
<rect x="2" y="2" width="7" height="7" fill="#c0e8ff"/><rect x="9" y="2" width="7" height="7" fill="#f070b0"/><rect x="16" y="2" width="7" height="7" fill="#f8c0d8"/><rect x="23" y="2" width="7" height="7" fill="#c8d840"/>
<rect x="2" y="9" width="7" height="7" fill="#909090"/><rect x="9" y="9" width="7" height="7" fill="#30c8ff"/><rect x="16" y="9" width="7" height="7" fill="#fff8c0"/><rect x="23" y="9" width="7" height="7" fill="#ffd8a0"/>
<rect x="2" y="16" width="7" height="7" fill="#f8b8d0"/><rect x="9" y="16" width="7" height="7" fill="#ff90a8"/><rect x="16" y="16" width="7" height="7" fill="#c8ffb8"/><rect x="23" y="16" width="7" height="7" fill="#90e890"/>
<rect x="2" y="23" width="7" height="7" fill="#58d0f0"/><rect x="9" y="23" width="7" height="7" fill="#90e8ff"/><rect x="16" y="23" width="7" height="7" fill="#60d0f0"/><rect x="23" y="23" width="7" height="7" fill="#f8f870"/></svg>
<div class="lbl" style="left:129px;top:656px">FLOOD-IT</div>
<svg class="ico" style="left:838px;top:614px" width="32" height="32" viewBox="0 0 32 32"><rect x="6.5" y="1" width="5" height="5" fill="#e0e0e0" stroke="#a0a0a0" stroke-width="0.5"/><rect x="6.5" y="7" width="5" height="5" fill="#e0e0e0" stroke="#a0a0a0" stroke-width="0.5"/><rect x="12.5" y="7" width="5" height="5" fill="#98b0e0" stroke="#6880b0" stroke-width="0.5"/><rect x="18.5" y="7" width="5" height="5" fill="#98b0e0" stroke="#6880b0" stroke-width="0.5"/>
<rect x="0.5" y="13" width="5" height="5" fill="#e0e0e0" stroke="#a0a0a0" stroke-width="0.5"/><rect x="6.5" y="13" width="5" height="5" fill="#e0e0e0" stroke="#a0a0a0" stroke-width="0.5"/><rect x="12.5" y="13" width="5" height="5" fill="#98b0e0" stroke="#6880b0" stroke-width="0.5"/><rect x="18.5" y="13" width="5" height="5" fill="#906040" stroke="#604020" stroke-width="0.5"/>
<rect x="0.5" y="19" width="11" height="12" fill="#20c010" stroke="#108000" stroke-width="0.5"/><path d="M6 19V31M0.5 25H11.5" stroke="#80f060" stroke-width="0.8"/><rect x="12.5" y="19" width="11" height="12" fill="#906040" stroke="#503010" stroke-width="0.5"/><path d="M18 19V31M12.5 25H23.5" stroke="#c09060" stroke-width="0.8"/><rect x="24.5" y="19" width="6" height="12" fill="#f06020" stroke="#a03010" stroke-width="0.5"/><rect x="18.5" y="25" width="5" height="6" fill="#f06020"/><path d="M24.5 25H30.5" stroke="#f8a060" stroke-width="0.8"/></svg>
<div class="lbl" style="left:813px;top:656px">CLICKS</div>
<svg class="ico" style="left:906px;top:614px" width="32" height="32" viewBox="0 0 32 32"><path d="M10 23.5Q10 21 16.5 21Q23.5 21 23.5 23.5V27.5Q23.5 30 16.5 30Q10 30 10 27.5Z" fill="#1a3a08"/>
<path d="M10.5 24Q10.5 22 16.5 22Q23 22 23 24V27Q23 29.3 16.5 29.3Q10.5 29.3 10.5 27Z" fill="#78b828"/><path d="M11 26H22.5M11 28H22" stroke="#c8e050" stroke-width="0.8"/><path d="M13 22.8H19.5" stroke="#000" stroke-width="1.2"/>
<path d="M4.5 27.5H10.5" stroke="#1a3a08" stroke-width="2.6"/><path d="M5 27.5H10.5" stroke="#90c830" stroke-width="1.4"/>
<path d="M15.5 8.5Q13.5 10 14.5 13Q16 16 20 18.5Q22.5 20.5 21.5 23" fill="none" stroke="#1a3a08" stroke-width="4"/><path d="M15.5 8.5Q13.5 10 14.5 13Q16 16 20 18.5Q22.5 20.5 21.5 23" fill="none" stroke="#80c030" stroke-width="2.4"/>
<path d="M14.5 9Q15 4 20 4Q25 4.5 24.5 8.5Q24 12 19 11.5Q16 11 14.5 9Z" fill="#78b828" stroke="#1a3a08" stroke-width="1"/><path d="M17 7Q20 5.5 23 7.5" stroke="#b0e050" stroke-width="1" fill="none"/><circle cx="19" cy="8.5" r="1" fill="#e01010"/></svg>
<div class="lbl" style="left:881px;top:656px">SNAKE</div>
<svg class="ico" style="left:974px;top:614px" width="32" height="32" viewBox="0 0 32 32"><defs><linearGradient id="tbg" x1="0" y1="1" x2="1" y2="0"><stop offset="0" stop-color="#3a78c8"/><stop offset="0.45" stop-color="#1a2a80"/><stop offset="1" stop-color="#0e1450"/></linearGradient><linearGradient id="tfc" x1="0" y1="0" x2="1" y2="1"><stop offset="0" stop-color="#f0f8ff"/><stop offset="1" stop-color="#40b8e8"/></linearGradient></defs>
<rect x="0" y="0" width="32" height="32" fill="url(#tbg)"/><circle cx="6" cy="5" r="1" fill="#e0f0ff"/><circle cx="27.5" cy="27" r="0.9" fill="#e0f0ff"/><circle cx="2.5" cy="28" r="0.6" fill="#c0d8ff"/><circle cx="25.5" cy="20.5" r="0.6" fill="#40c0f0"/><circle cx="17.5" cy="30" r="0.5" fill="#fff"/><circle cx="14" cy="4" r="0.5" fill="#40c0f0"/>
<path d="M1.2 11.6L24.1 1.7L30.4 8V13.2L22 17.9V25.2L13.2 30.4L8.5 25.2V23L1.2 20.5Z" fill="#000"/>
<path d="M24.9 3L29.5 8.3V13L24.9 11.6ZM17.4 14.75L24.9 11.6L29.5 13L21.5 17.5V25L17.4 25.2Z" fill="#6a6898"/><path d="M2 20L8.5 20.5L9 25.2L13 29.5L21.5 25L17.4 25.2L9 25.2" fill="#7a78a8"/>
<path d="M2 12.1L24.1 2.3L24.9 11.6L17.4 14.75V25.2H9L8.5 20.5L2 20Z" fill="url(#tfc)"/><path d="M8.5 10L9 21M16 7L17 15" stroke="#30a8e0" stroke-width="0.8"/></svg>
<div class="lbl" style="left:949px;top:656px">TETRIS</div>
<svg class="ico" style="left:18px;top:682px" width="32" height="32" viewBox="0 0 32 32"><rect x="0.5" y="0.5" width="30" height="30" fill="#f8f8f8" stroke="#000" stroke-width="1.2"/><path d="M1 10.5H30M1 20.5H30M10.5 1V30M20.5 1V30" stroke="#f8f8f8"/>
<rect x="1.5" y="1.5" width="8.5" height="8.5" fill="#d8d8d8"/><rect x="11" y="1.5" width="9" height="8.5" fill="#d8d8d8"/><rect x="21" y="1.5" width="9" height="8.5" fill="#d8d8d8"/><rect x="1.5" y="11" width="8.5" height="9" fill="#d8d8d8"/><rect x="11" y="11" width="9" height="9" fill="#d8d8d8"/><rect x="21" y="11" width="9" height="9" fill="#d8d8d8"/><rect x="1.5" y="21" width="8.5" height="9" fill="#d8d8d8"/><rect x="11" y="21" width="9" height="9" fill="#d8d8d8"/><rect x="21" y="21" width="9" height="9" fill="#d8d8d8"/>
<text x="25.5" y="9" font-family="Liberation Mono" font-size="10" fill="#b03070" text-anchor="middle">8</text><text x="5.5" y="19" font-family="Liberation Mono" font-size="10" fill="#204090" text-anchor="middle">9</text><text x="15.5" y="19" font-family="Liberation Mono" font-size="10" fill="#208020" text-anchor="middle">7</text><text x="15.5" y="29" font-family="Liberation Mono" font-size="10" fill="#a01010" text-anchor="middle">2</text></svg>
<div class="lbl" style="left:-7px;top:724px">SUDOKU</div>
<svg class="ico" style="left:86px;top:682px" width="32" height="32" viewBox="0 0 32 32"><rect x="0.5" y="0.5" width="30" height="30" fill="#f8f8f8" stroke="#000" stroke-width="1.2"/>
<rect x="1.5" y="1.5" width="8.5" height="8.5" fill="#d8d8d8"/><rect x="11" y="1.5" width="9" height="8.5" fill="#d8d8d8"/><rect x="21" y="1.5" width="9" height="8.5" fill="#d8d8d8"/><rect x="1.5" y="11" width="8.5" height="9" fill="#d8d8d8"/><rect x="11" y="11" width="9" height="9" fill="#d8d8d8"/><rect x="21" y="11" width="9" height="9" fill="#d8d8d8"/><rect x="1.5" y="21" width="8.5" height="9" fill="#d8d8d8"/><rect x="11" y="21" width="9" height="9" fill="#d8d8d8"/><rect x="21" y="21" width="9" height="9" fill="#d8d8d8"/>
<circle cx="5.5" cy="5.5" r="3" fill="none" stroke="#2050a0" stroke-width="0.9"/><circle cx="15.5" cy="15.5" r="3" fill="none" stroke="#2050a0" stroke-width="0.9"/><circle cx="25.5" cy="15.5" r="3" fill="none" stroke="#2050a0" stroke-width="0.9"/><circle cx="15.5" cy="25.5" r="3" fill="none" stroke="#2050a0" stroke-width="0.9"/>
<path d="M12.5 2.5L18.5 8.5M18.5 2.5L12.5 8.5M2.5 12.5L8.5 18.5M8.5 12.5L2.5 18.5M2.5 22.5L8.5 28.5M8.5 22.5L2.5 28.5M22.5 22.5L28.5 28.5M28.5 22.5L22.5 28.5" stroke="#404040" stroke-width="0.9"/></svg>
<div class="lbl" style="left:61px;top:724px">GOMOKU</div>
<svg class="ico" style="left:154px;top:682px" width="32" height="32" viewBox="0 0 32 32"><path d="M20 2.5H30L27 8L19 26" fill="none" stroke="#202020" stroke-width="2.2"/><path d="M20 2.5H30L27 8L19 26M20 2.5L17 9" fill="none" stroke="#e0e0e0" stroke-width="1"/>
<path d="M16 9Q19 7 24 9V24H16Z" fill="#303030"/><path d="M2 21L14 13Q20 12 24 16L21 27L8 30L2 26Z" fill="#40d020" stroke="#101010" stroke-width="1"/><path d="M8 16Q12 11 18 12L20 17L14 22L10 22Z" fill="#505050" stroke="#202020" stroke-width="0.8"/>
<path d="M3 21L14 15L21 17L9 24Z" fill="#70f040" opacity="0.7"/><circle cx="6" cy="27.5" r="3" fill="#101010"/><circle cx="14.5" cy="28" r="3.5" fill="#101010"/><circle cx="14.5" cy="28" r="1.8" fill="#30c020"/><circle cx="22" cy="25" r="3.5" fill="#101010"/><circle cx="22" cy="25" r="1.8" fill="#30c020"/></svg>
<div class="lbl" style="left:129px;top:724px">KOSILKA</div>
<svg class="ico" style="left:222px;top:682px" width="32" height="32" viewBox="0 0 32 32"><ellipse cx="8" cy="7.5" rx="7.5" ry="4.5" fill="#a8c0f0"/><ellipse cx="8" cy="6.5" rx="7" ry="4" fill="#d8e4ff"/><ellipse cx="8" cy="6.5" rx="3" ry="1.6" fill="none" stroke="#90a8d8" stroke-width="0.8"/>
<ellipse cx="8" cy="19.5" rx="7.5" ry="4.5" fill="#a8c0f0"/><ellipse cx="8" cy="18.5" rx="7" ry="4" fill="#d8e4ff"/><ellipse cx="8" cy="18.5" rx="3" ry="1.6" fill="none" stroke="#90a8d8" stroke-width="0.8"/>
<ellipse cx="24" cy="12.5" rx="7.5" ry="4.5" fill="#909090"/><ellipse cx="24" cy="11.5" rx="7" ry="4" fill="#c8c8c8"/><ellipse cx="24" cy="11.5" rx="3" ry="1.6" fill="none" stroke="#888" stroke-width="0.8"/>
<ellipse cx="24" cy="24.5" rx="7.5" ry="4.5" fill="#909090"/><ellipse cx="24" cy="23.5" rx="7" ry="4" fill="#c8c8c8"/><ellipse cx="24" cy="23.5" rx="3" ry="1.6" fill="none" stroke="#888" stroke-width="0.8"/></svg>
<div class="lbl" style="left:197px;top:724px">CHECKERS</div>
<svg class="ico" style="left:770px;top:682px" width="32" height="32" viewBox="0 0 32 32"><rect x="0.5" y="0.5" width="31" height="31" fill="#0a1830" stroke="#000" stroke-width="1"/><rect x="1.5" y="1.5" width="29" height="29" fill="#0a2050" stroke="#f4f0f0" stroke-width="1"/><rect x="3" y="3" width="5.5" height="5.5" fill="#22c822"/><path d="M3.5 8V3.5 H8" stroke="#88ff30" stroke-width="1" fill="none"/><rect x="10" y="3" width="5.5" height="5.5" fill="#22c822"/><path d="M10.5 8V3.5 H15" stroke="#88ff30" stroke-width="1" fill="none"/><rect x="17" y="3" width="5.5" height="5.5" fill="#22c822"/><path d="M17.5 8V3.5 H22" stroke="#88ff30" stroke-width="1" fill="none"/><rect x="24" y="3" width="5.5" height="5.5" fill="#22c822"/><path d="M24.5 8V3.5 H29" stroke="#88ff30" stroke-width="1" fill="none"/><rect x="3" y="10" width="5.5" height="5.5" fill="#22c822"/><path d="M3.5 15V10.5 H8" stroke="#88ff30" stroke-width="1" fill="none"/><rect x="10" y="10" width="5.5" height="5.5" fill="#22c822"/><path d="M10.5 15V10.5 H15" stroke="#88ff30" stroke-width="1" fill="none"/><rect x="17" y="10" width="5.5" height="5.5" fill="#22c822"/><path d="M17.5 15V10.5 H22" stroke="#88ff30" stroke-width="1" fill="none"/><rect x="24" y="10" width="5.5" height="5.5" fill="#22c822"/><path d="M24.5 15V10.5 H29" stroke="#88ff30" stroke-width="1" fill="none"/><rect x="3" y="17" width="5.5" height="5.5" fill="#22c822"/><path d="M3.5 22V17.5 H8" stroke="#88ff30" stroke-width="1" fill="none"/><rect x="10.5" y="17.5" width="4.5" height="4.5" fill="#909098" stroke="#e0d0c8" stroke-width="1"/><rect x="17" y="17" width="5.5" height="5.5" fill="#22c822"/><path d="M17.5 22V17.5 H22" stroke="#88ff30" stroke-width="1" fill="none"/><rect x="24" y="17" width="5.5" height="5.5" fill="#22c822"/><path d="M24.5 22V17.5 H29" stroke="#88ff30" stroke-width="1" fill="none"/><rect x="3" y="24" width="5.5" height="5.5" fill="#22c822"/><path d="M3.5 29V24.5 H8" stroke="#88ff30" stroke-width="1" fill="none"/><rect x="10" y="24" width="5.5" height="5.5" fill="#22c822"/><path d="M10.5 29V24.5 H15" stroke="#88ff30" stroke-width="1" fill="none"/><rect x="17" y="24" width="5.5" height="5.5" fill="#22c822"/><path d="M17.5 29V24.5 H22" stroke="#88ff30" stroke-width="1" fill="none"/><rect x="24" y="24" width="5.5" height="5.5" fill="#22c822"/><path d="M24.5 29V24.5 H29" stroke="#88ff30" stroke-width="1" fill="none"/></svg>
<div class="lbl" style="left:745px;top:724px">15</div>
<svg class="ico" style="left:838px;top:682px" width="32" height="32" viewBox="0 0 32 32"><rect x="0" y="0" width="32" height="32" fill="#2c2c48"/>
<path d="M9 11.5Q9 1 16.5 1Q24 1 24 11.5Q32 14 32 20Q32 28 16 28Q0 28 0 20Q0 14 9 11.5Z" fill="#d8c890"/><path d="M10 12Q10 2.5 16.5 2.5Q23 2.5 23 12Q30.5 14.5 30.5 20Q30.5 26.5 16 26.5Q1.5 26.5 1.5 20Q1.5 14.5 10 12Z" fill="#d8d8e0"/>
<path d="M12 13Q12 5 16.5 5Q21 5 21 13Q28 15 28 19Q28 24 16 24Q4 24 4 19Q4 15 12 13Z" fill="#f0d890" opacity="0.7"/><circle cx="16" cy="10" r="5" fill="#a8b0c0"/><circle cx="15" cy="8.5" r="3" fill="#d0d4dc"/><path d="M15 15Q20 15 20 11" fill="#6080a8"/>
<rect x="3.5" y="17" width="24.5" height="5" rx="1" fill="#003090"/><rect x="4" y="17.2" width="23.5" height="1.8" fill="#3a90e0"/><rect x="3" y="16.8" width="3" height="5.4" rx="1.2" fill="#d86810"/><rect x="25.5" y="16.8" width="3" height="5.4" rx="1.2" fill="#c05810"/>
<ellipse cx="16" cy="24" rx="8" ry="1.5" fill="#7090b8" opacity="0.6"/></svg>
<div class="lbl" style="left:813px;top:724px">PONG</div>
<svg class="ico" style="left:906px;top:682px" width="32" height="32" viewBox="0 0 32 32"><path d="M0.5 22Q4 19 9 22Q13 24 17 25L22 29.5L21 31.5H3Q0 28 0.5 22Z" fill="#a8c0f8"/><path d="M2 24Q6 22 10 25M3 27Q8 25 14 28M5 30Q10 28 18 30" stroke="#fff" stroke-width="1.2" fill="none"/>
<path d="M26 24L32 25.5V29L26 28Z" fill="#5a78d8" opacity="0.7"/>
<path d="M1.5 13L25 22.5L27 27L22 29L1.5 20Z" fill="#5a5a5a"/><path d="M1.2 19L22 28" stroke="#f01010" stroke-width="1.6"/><path d="M3 16L5 16.7M7 17.5L9 18.3M11 19L13 19.8M15 20.5L17 21.3M19 22L21 22.8" stroke="#c8c8c8" stroke-width="1"/><path d="M23 24.5V30" stroke="#000" stroke-width="1.5"/>
<path d="M2 11Q1 7 4 4L9 3L16 1.5L22 2.5L24 7L25.5 11L27 17L22 21L12 17L3 14Z" fill="#fff"/><path d="M27 15L32 27" stroke="#f0f0f0" stroke-width="2"/><path d="M27 15L32 27" stroke="#b07820" stroke-width="0.8" stroke-dasharray="1 1"/>
<path d="M7 1.5H12M14 1.3H21M4 6H15M14 6H23M5 10.5H16M15 10.5H24M9 15H20" stroke="#c08020" stroke-width="1"/><path d="M5.5 3V15M14 2V18M21 2.5V19" stroke="#a07020" stroke-width="0.9"/><path d="M9 3V15M17 3V17" stroke="#a0a0b0" stroke-width="0.6"/></svg>
<div class="lbl" style="left:881px;top:724px">SEAWAR</div>
<svg class="ico" style="left:974px;top:682px" width="32" height="32" viewBox="0 0 32 32"><defs><radialGradient id="mg" cx="0.38" cy="0.35" r="0.7"><stop offset="0" stop-color="#ffffff"/><stop offset="0.35" stop-color="#b8b8b8"/><stop offset="1" stop-color="#585858"/></radialGradient></defs>
<path d="M16 0.5V5M16 27V31.5M0.5 16H5M27 16H31.5M4.5 4.5L8 8M24 24L27.5 27.5M27.5 4.5L24 8M4.5 27.5L8 24" stroke="#000" stroke-width="2.8" stroke-linecap="round"/>
<circle cx="16" cy="16" r="12.5" fill="url(#mg)"/>
<path d="M16 1.5V5.5M16 26.5V30.5M1.5 16H5.5M26.5 16H30.5M5 5L8 8M24 24L27 27M27 5L24 8M5 27L8 24" stroke="#f0f0f0" stroke-width="1.2" stroke-linecap="round"/>
<g fill="#000"><circle cx="11" cy="11" r="2"/><circle cx="21" cy="11" r="2"/><circle cx="16" cy="16" r="2"/><circle cx="11" cy="21" r="2"/><circle cx="21" cy="21" r="2"/></g><g fill="#fff"><circle cx="11.3" cy="11.5" r="0.8"/><circle cx="21.3" cy="11.5" r="0.8"/><circle cx="16.3" cy="16.5" r="0.8"/><circle cx="11.3" cy="21.5" r="0.8"/><circle cx="21.3" cy="21.5" r="0.8"/></g></svg>
<div class="lbl" style="left:949px;top:724px">MINE</div>
</div>

<!-- Generate files window -->
<div class="win" id="gen" style="left:142px;top:95px;width:361px;height:75px">
 <div class="ttl"><div class="t" style="left:5px;top:4px">Generate files</div>
  <div class="a" style="left:301px;top:0;width:28px;height:18px;background:linear-gradient(#f2f2f2,#dcdcdc);border:1px solid #8a8a8a;border-top:none;border-radius:0 0 0 3px"><div class="a" style="left:10px;top:10px;width:7px;height:2px;background:#444"></div></div>
  <div class="a" style="left:328px;top:0;width:28px;height:18px;background:linear-gradient(#c4c4c4,#a6a6a6);border:1px solid #8a8a8a;border-top:none;border-radius:0 0 3px 0"><svg class="a" style="left:10px;top:5px" width="8" height="8"><path d="M1 1L7 7M7 1L1 7" stroke="#fff" stroke-width="1.8"/></svg></div>
 </div>
 <div class="a" style="left:4px;top:23px;width:351px;height:46px;background:#fff">
  <div class="sys a" style="left:7px;top:10px">Path:</div>
  <div class="a" style="left:48px;top:8px;width:101px;height:15px;border:1px solid #000;background:#fff"><div class="sys a" style="left:1px;top:0px">/tmp0/1</div></div>
  <div class="sys a" style="left:175px;top:10px">Count:</div>
  <div class="a" style="left:216px;top:8px;width:61px;height:15px;border:1px solid #000;background:#fff"><div class="sys a" style="left:1px;top:0px">10000</div></div>
  <div class="a" style="left:8px;top:25px;width:269px;height:10px;background:#6cb4e6;border:1px solid #3e5e7c"></div>
  <div class="sys a" style="left:168px;top:36px">done</div>
  <div class="a" style="left:288px;top:8px;width:54px;height:27px;background:#dcdcdc;border:1px solid #707070;border-radius:2px"><div class="sys a" style="left:13px;top:7px">Start</div></div>
 </div>
</div>
<!-- fNav -->
<div class="win" id="fnav" style="left:258px;top:192px;width:513px;height:385px">
 <div class="ttl"><div class="t" style="left:5px;top:4px">fNav 0.44</div></div>
 <div class="a" style="left:4px;top:23px;width:504px;height:356px;background:#f8f9f8"></div>
 <div class="a" style="left:9px;top:28px;width:500px;height:29px;border:1px solid #8c8cf0;border-right:none"></div>
 <div class="nb a" style="left:11px;top:31px"><svg width="21" height="21"><defs><linearGradient id="ga" x1="0" y1="0" x2="1" y2="0"><stop offset="0" stop-color="#3a10f0"/><stop offset="0.45" stop-color="#4a20f0"/><stop offset="1" stop-color="#e8e0ff"/></linearGradient></defs><path d="M2.25 10.5L11 2.8V7.4H17Q18.8 7.4 18.8 10.5Q18.8 13.6 17 13.6H11V18.2Z" fill="url(#ga)" stroke="#5a38f0" stroke-width="0.7"/></svg></div>
 <div class="nb a" style="left:34px;top:31px"><svg width="21" height="21"><defs><linearGradient id="ga2" x1="1" y1="0" x2="0" y2="0"><stop offset="0" stop-color="#3a10f0"/><stop offset="0.45" stop-color="#4a20f0"/><stop offset="1" stop-color="#e8e0ff"/></linearGradient></defs><path d="M18.6 10.5L10 2.8V7.4H4Q2.2 7.4 2.2 10.5Q2.2 13.6 4 13.6H10V18.2Z" fill="url(#ga2)" stroke="#5a38f0" stroke-width="0.7"/></svg></div>
 <div class="nb a" style="left:57px;top:31px"><svg width="21" height="21"><defs><linearGradient id="gu" x1="0" y1="0" x2="0" y2="1"><stop offset="0" stop-color="#2e6a2e"/><stop offset="0.4" stop-color="#3a783a"/><stop offset="1" stop-color="#e0f0e0"/></linearGradient></defs><path d="M10.6 2.4L18.75 11H13.75V17Q13.75 18.6 10.6 18.6Q7.5 18.6 7.5 17V11H2.5Z" fill="url(#gu)" stroke="#4a7a4a" stroke-width="0.7"/></svg></div>
 <div class="a" style="left:80px;top:35px;width:430px;height:15px;border:1px solid #8c8cf0;border-right:none;background:#fff"><div class="sys a" style="left:1px;top:0px">/rd/1/File Managers/</div><div class="sys a" style="left:238px;top:4px">24.04.2017</div><div class="sys a" style="left:314px;top:4px">-A--</div></div>
 <div class="db a" style="top:64px"><div class="sys a" style="left:1px;top:1px">/rd/1/</div></div>
 <div class="db a" style="top:79px"><div class="sys a" style="left:1px;top:1px">/fd/1/</div></div>
 <div class="db a" style="top:94px"><div class="sys a" style="left:1px;top:1px">/fd2/1/</div></div>
 <div class="db a" style="top:109px"><div class="sys a" style="left:1px;top:1px">/hd0/1/</div></div>
 <div class="db a" style="top:124px"><div class="sys a" style="left:1px;top:1px">/tmp0/1/</div></div>
 <div class="db a" style="top:139px"><div class="sys a" style="left:1px;top:1px">/cd2/1/</div></div>
 <div class="a" style="left:79px;top:62px;width:430px;height:15px;background:#e8ecff;border-top:1px solid #909090;border-bottom:2px solid #707070"></div>
 <div class="hc a" style="left:79px;width:23px"></div>
 <div class="hc a" style="left:101px;width:106px;background:#dcdcfa"><svg class="a" style="left:0px;top:3px" width="6" height="4"><path d="M0 4L3 0L6 4Z" fill="#2020e0"/></svg><div class="sys a" style="left:38px;top:0px">Name</div></div>
 <div class="hc a" style="left:206px;width:47px"><div class="sys a" style="left:13px;top:0px">Ext</div></div>
 <div class="hc a" style="left:252px;width:59px"><div class="sys a" style="left:15px;top:0px">Size</div></div>
 <div class="hc a" style="left:310px;width:200px"></div>
 <div class="a" style="left:79px;top:77px;width:349px;height:275px;border-left:1px solid #8c8cf0;border-bottom:1px solid #8c8cf0;background:#fff"></div>
 <div class="a" style="left:80px;top:78px;width:347px;height:21px;"><svg class="a" style="left:2px;top:2px" width="18" height="18"><path d="M0 2Q0 0.5 1.5 0.5H7.5Q9 0.5 9 2V3.5H16Q17.5 3.5 17.5 5V15.5Q17.5 17 16 17H1.5Q0 17 0 15.5Z" fill="url(#gd)"/></svg><div class="sys a" style="left:21px;top:4px;color:#000">FNAV</div><div class="sys a" style="left:134px;top:4px;color:#000"></div><div class="sys a" style="left:190px;top:4px;width:32px;text-align:right;color:#000"></div><div class="sys a" style="left:238px;top:4px">24.04.2017</div><div class="sys a" style="left:314px;top:4px">-A--</div></div>
 <div class="a" style="left:80px;top:99px;width:347px;height:21px;"><svg class="a" style="left:3px;top:3px" width="16" height="15"><rect x="0" y="0" width="16" height="14" rx="1" fill="url(#gb)"/><path d="M0 3Q4 4 8 7.5Q12 4 16 3V8.5Q12 7.5 8 8Q4 7.5 0 8.5Z" fill="#3a8a30"/><path d="M0 5Q4 6 8 7.8Q4 9 0 10Z" fill="#1e5a1a"/><path d="M16 5Q12 6 8 7.8Q12 9 16 10Z" fill="#2a6a22"/><path d="M1 11Q8 8.5 15 11V14H1Z" fill="#6a9ae0"/><path d="M3 12.5Q8 11 13 12.5" stroke="#c8e0ff" stroke-width="0.8" fill="none"/></svg><div class="sys a" style="left:21px;top:4px;color:#000">BUTTONS.BMP</div><div class="sys a" style="left:134px;top:4px;color:#000">BMP</div><div class="sys a" style="left:190px;top:4px;width:32px;text-align:right;color:#000">6 kb</div><div class="sys a" style="left:238px;top:4px">24.04.2017</div><div class="sys a" style="left:314px;top:4px">-A--</div></div>
 <div class="a" style="left:80px;top:120px;width:347px;height:21px;"><svg class="a" style="left:4px;top:2px" width="14" height="18"><path d="M0.5 1.5Q0.5 0.5 1.5 0.5H9L13 4.5V16Q13 17 12 17H1.5Q0.5 17 0.5 16Z" fill="url(#gf)"/><path d="M9 0.5V4.5H13Z" fill="#b8c8ff"/></svg><div class="sys a" style="left:21px;top:4px;color:#000">EOLITE</div><div class="sys a" style="left:134px;top:4px;color:#000"></div><div class="sys a" style="left:190px;top:4px;width:32px;text-align:right;color:#000">30 kb</div><div class="sys a" style="left:238px;top:4px">24.04.2017</div><div class="sys a" style="left:314px;top:4px">-A--</div></div>
 <div class="a" style="left:80px;top:141px;width:347px;height:21px;"><svg class="a" style="left:3px;top:3px" width="16" height="15"><rect x="0" y="0" width="16" height="14" rx="1" fill="url(#gb)"/><path d="M0 3Q4 4 8 7.5Q12 4 16 3V8.5Q12 7.5 8 8Q4 7.5 0 8.5Z" fill="#3a8a30"/><path d="M0 5Q4 6 8 7.8Q4 9 0 10Z" fill="#1e5a1a"/><path d="M16 5Q12 6 8 7.8Q12 9 16 10Z" fill="#2a6a22"/><path d="M1 11Q8 8.5 15 11V14H1Z" fill="#6a9ae0"/><path d="M3 12.5Q8 11 13 12.5" stroke="#c8e0ff" stroke-width="0.8" fill="none"/></svg><div class="sys a" style="left:21px;top:4px;color:#000">ICONS.BMP</div><div class="sys a" style="left:134px;top:4px;color:#000">BMP</div><div class="sys a" style="left:190px;top:4px;width:32px;text-align:right;color:#000">5 kb</div><div class="sys a" style="left:238px;top:4px">24.04.2017</div><div class="sys a" style="left:314px;top:4px">-A--</div></div>
 <div class="a" style="left:80px;top:162px;width:347px;height:21px;"><svg class="a" style="left:4px;top:2px" width="14" height="18"><path d="M0.5 1.5Q0.5 0.5 1.5 0.5H9L13 4.5V16Q13 17 12 17H1.5Q0.5 17 0.5 16Z" fill="url(#gf)"/><path d="M9 0.5V4.5H13Z" fill="#b8c8ff"/></svg><div class="sys a" style="left:21px;top:4px;color:#000">ICONS.INI</div><div class="sys a" style="left:134px;top:4px;color:#000">INI</div><div class="sys a" style="left:190px;top:4px;width:32px;text-align:right;color:#000">2 kb</div><div class="sys a" style="left:238px;top:4px">24.04.2017</div><div class="sys a" style="left:314px;top:4px">-A--</div></div>
 <div class="a" style="left:80px;top:183px;width:347px;height:21px;"><svg class="a" style="left:4px;top:2px" width="14" height="18"><path d="M0.5 1.5Q0.5 0.5 1.5 0.5H9L13 4.5V16Q13 17 12 17H1.5Q0.5 17 0.5 16Z" fill="url(#gf)"/><path d="M9 0.5V4.5H13Z" fill="#b8c8ff"/></svg><div class="sys a" style="left:21px;top:4px;color:#000">KFAR</div><div class="sys a" style="left:134px;top:4px;color:#000"></div><div class="sys a" style="left:190px;top:4px;width:32px;text-align:right;color:#000">25 kb</div><div class="sys a" style="left:238px;top:4px">24.04.2017</div><div class="sys a" style="left:314px;top:4px">-A--</div></div>
 <div class="a" style="left:80px;top:204px;width:347px;height:21px;"><svg class="a" style="left:4px;top:2px" width="14" height="18"><path d="M0.5 1.5Q0.5 0.5 1.5 0.5H9L13 4.5V16Q13 17 12 17H1.5Q0.5 17 0.5 16Z" fill="url(#gf)"/><path d="M9 0.5V4.5H13Z" fill="#b8c8ff"/></svg><div class="sys a" style="left:21px;top:4px;color:#000">KFAR.INI</div><div class="sys a" style="left:134px;top:4px;color:#000">INI</div><div class="sys a" style="left:190px;top:4px;width:32px;text-align:right;color:#000">3 kb</div><div class="sys a" style="left:238px;top:4px">24.04.2017</div><div class="sys a" style="left:314px;top:4px">-A--</div></div>
 <div class="a" style="left:80px;top:225px;width:347px;height:21px;"><svg class="a" style="left:4px;top:2px" width="14" height="18"><path d="M0.5 1.5Q0.5 0.5 1.5 0.5H9L13 4.5V16Q13 17 12 17H1.5Q0.5 17 0.5 16Z" fill="url(#gf)"/><path d="M9 0.5V4.5H13Z" fill="#b8c8ff"/></svg><div class="sys a" style="left:21px;top:4px;color:#000">KFM</div><div class="sys a" style="left:134px;top:4px;color:#000"></div><div class="sys a" style="left:190px;top:4px;width:32px;text-align:right;color:#000">11 kb</div><div class="sys a" style="left:238px;top:4px">24.04.2017</div><div class="sys a" style="left:314px;top:4px">-A--</div></div>
 <div class="a" style="left:80px;top:246px;width:347px;height:21px;"><svg class="a" style="left:4px;top:2px" width="14" height="18"><path d="M0.5 1.5Q0.5 0.5 1.5 0.5H9L13 4.5V16Q13 17 12 17H1.5Q0.5 17 0.5 16Z" fill="url(#gf)"/><path d="M9 0.5V4.5H13Z" fill="#b8c8ff"/></svg><div class="sys a" style="left:21px;top:4px;color:#000">KFM.INI</div><div class="sys a" style="left:134px;top:4px;color:#000">INI</div><div class="sys a" style="left:190px;top:4px;width:32px;text-align:right;color:#000">3 kb</div><div class="sys a" style="left:238px;top:4px">24.04.2017</div><div class="sys a" style="left:314px;top:4px">-A--</div></div>
 <div class="a" style="left:80px;top:267px;width:347px;height:21px;"><svg class="a" style="left:3px;top:2px" width="15" height="18"><path d="M1.5 1.5H10L13.5 5V16.5H1.5Z" fill="#fff" stroke="#4a2a1a" stroke-width="1.6"/><path d="M4 6H9M4 8.5H11M4 11H11M4 13.5H11" stroke="#4a2a1a" stroke-width="1.2"/></svg><div class="sys a" style="left:21px;top:4px;color:#000">KFM_KEYS.TXT</div><div class="sys a" style="left:134px;top:4px;color:#000">TXT</div><div class="sys a" style="left:190px;top:4px;width:32px;text-align:right;color:#000">3 kb</div><div class="sys a" style="left:238px;top:4px">24.04.2017</div><div class="sys a" style="left:314px;top:4px">-A--</div></div>
 <div class="a" style="left:80px;top:288px;width:347px;height:21px;background:#0000c0;"><svg class="a" style="left:4px;top:2px" width="14" height="18"><path d="M0.5 1.5Q0.5 0.5 1.5 0.5H9L13 4.5V16Q13 17 12 17H1.5Q0.5 17 0.5 16Z" fill="url(#gf)"/><path d="M9 0.5V4.5H13Z" fill="#b8c8ff"/></svg><div class="sys a" style="left:21px;top:4px;color:#fff">OPENDIAL</div><div class="sys a" style="left:134px;top:4px;color:#fff"></div><div class="sys a" style="left:190px;top:4px;width:32px;text-align:right;color:#fff">5 kb</div><div class="sys a" style="left:238px;top:4px;color:#fff">23.04.2018</div><div class="sys a" style="left:314px;top:4px;color:#fff">-A--</div></div>
 <div class="a" style="left:427px;top:77px;width:17px;height:275px;background:#6a96f8;border:1px solid #1a1a30"><div class="a" style="left:-1px;bottom:-1px;width:17px;height:17px;border:1px solid #1a1a30"><svg class="a" style="left:3px;top:5px" width="10" height="6"><path d="M0 0H10L5 5Z" fill="#1a1a30"/></svg></div></div>
 <div class="sys a" style="left:200px;top:360px">Files: 10    Dirs: 1</div>
</div>
<!-- Open dialog -->
<div class="win" id="od" style="left:575px;top:32px;width:443px;height:439px">
 <div class="ttl"><div class="t" style="left:5px;top:4px">Open Dialog</div>
  <div class="a" style="left:383px;top:0;width:28px;height:18px;background:linear-gradient(#f2f2f2,#dcdcdc);border:1px solid #8a8a8a;border-top:none;border-radius:0 0 0 3px"><div class="a" style="left:10px;top:10px;width:7px;height:2px;background:#333"></div></div>
  <div class="a" style="left:410px;top:0;width:28px;height:18px;background:linear-gradient(#f4aab2,#e07c86);border:1px solid #8a8a8a;border-top:none;border-radius:0 0 3px 0"><svg class="a" style="left:10px;top:5px" width="8" height="8"><path d="M1 1L7 7M7 1L1 7" stroke="#fff" stroke-width="1.8"/></svg></div>
 </div>
 <div class="a" style="left:15px;top:31px;width:401px;height:13px;background:#fefcc8"><div class="sys a" style="left:3px;top:0px">/tmp0/1</div></div>
 <div class="sys a" style="left:18px;top:51px">Select Disk</div>
 <div class="sys a" style="left:102px;top:51px">Sort</div>
 <div class="sys a" style="left:138px;top:51px">Filter</div>
 <div class="ob a" style="left:297px;top:48px;width:61px;height:17px"><div class="bt a" style="left:1px;top:1px">Refresh</div></div>
 <div class="ob a" style="left:367px;top:48px;width:51px;height:17px"><svg class="a" style="left:20px;top:0px" width="9" height="15"><path d="M1 5L4.5 1.5L8 5M1 9L4.5 5.5L8 9M1 13L4.5 9.5L8 13" stroke="#fff" stroke-width="1.1" fill="none"/></svg></div>
 <div class="a" style="left:14px;top:68px;width:420px;height:340px;background:#fff"></div>
 <div class="a" style="left:33px;top:391px;width:385px;height:17px;background:#b8dcfc"></div>
 <svg class="a" style="left:17px;top:68px" width="13" height="16"><path d="M0.5 0.5H8.5L12.5 4.5V15.5H0.5Z" fill="url(#gp)" stroke="#4c5274" stroke-width="1"/><path d="M8.5 0.5V4.5H12.5" fill="none" stroke="#4c5274" stroke-width="1"/></svg><div class="sys a" style="left:33px;top:70px">ZG</div><div class="sys a" style="left:347px;top:70px">0 24.05.18</div>
 <svg class="a" style="left:17px;top:85px" width="13" height="16"><path d="M0.5 0.5H8.5L12.5 4.5V15.5H0.5Z" fill="url(#gp)" stroke="#4c5274" stroke-width="1"/><path d="M8.5 0.5V4.5H12.5" fill="none" stroke="#4c5274" stroke-width="1"/></svg><div class="sys a" style="left:33px;top:87px">ZH</div><div class="sys a" style="left:347px;top:87px">0 24.05.18</div>
 <svg class="a" style="left:17px;top:102px" width="13" height="16"><path d="M0.5 0.5H8.5L12.5 4.5V15.5H0.5Z" fill="url(#gp)" stroke="#4c5274" stroke-width="1"/><path d="M8.5 0.5V4.5H12.5" fill="none" stroke="#4c5274" stroke-width="1"/></svg><div class="sys a" style="left:33px;top:104px">ZI</div><div class="sys a" style="left:347px;top:104px">0 24.05.18</div>
 <svg class="a" style="left:17px;top:119px" width="13" height="16"><path d="M0.5 0.5H8.5L12.5 4.5V15.5H0.5Z" fill="url(#gp)" stroke="#4c5274" stroke-width="1"/><path d="M8.5 0.5V4.5H12.5" fill="none" stroke="#4c5274" stroke-width="1"/></svg><div class="sys a" style="left:33px;top:121px">ZJ</div><div class="sys a" style="left:347px;top:121px">0 24.05.18</div>
 <svg class="a" style="left:17px;top:136px" width="13" height="16"><path d="M0.5 0.5H8.5L12.5 4.5V15.5H0.5Z" fill="url(#gp)" stroke="#4c5274" stroke-width="1"/><path d="M8.5 0.5V4.5H12.5" fill="none" stroke="#4c5274" stroke-width="1"/></svg><div class="sys a" style="left:33px;top:138px">ZK</div><div class="sys a" style="left:347px;top:138px">0 24.05.18</div>
 <svg class="a" style="left:17px;top:153px" width="13" height="16"><path d="M0.5 0.5H8.5L12.5 4.5V15.5H0.5Z" fill="url(#gp)" stroke="#4c5274" stroke-width="1"/><path d="M8.5 0.5V4.5H12.5" fill="none" stroke="#4c5274" stroke-width="1"/></svg><div class="sys a" style="left:33px;top:155px">ZL</div><div class="sys a" style="left:347px;top:155px">0 24.05.18</div>
 <svg class="a" style="left:17px;top:170px" width="13" height="16"><path d="M0.5 0.5H8.5L12.5 4.5V15.5H0.5Z" fill="url(#gp)" stroke="#4c5274" stroke-width="1"/><path d="M8.5 0.5V4.5H12.5" fill="none" stroke="#4c5274" stroke-width="1"/></svg><div class="sys a" style="left:33px;top:172px">ZM</div><div class="sys a" style="left:347px;top:172px">0 24.05.18</div>
 <svg class="a" style="left:17px;top:187px" width="13" height="16"><path d="M0.5 0.5H8.5L12.5 4.5V15.5H0.5Z" fill="url(#gp)" stroke="#4c5274" stroke-width="1"/><path d="M8.5 0.5V4.5H12.5" fill="none" stroke="#4c5274" stroke-width="1"/></svg><div class="sys a" style="left:33px;top:189px">ZN</div><div class="sys a" style="left:347px;top:189px">0 24.05.18</div>
 <svg class="a" style="left:17px;top:204px" width="13" height="16"><path d="M0.5 0.5H8.5L12.5 4.5V15.5H0.5Z" fill="url(#gp)" stroke="#4c5274" stroke-width="1"/><path d="M8.5 0.5V4.5H12.5" fill="none" stroke="#4c5274" stroke-width="1"/></svg><div class="sys a" style="left:33px;top:206px">ZO</div><div class="sys a" style="left:347px;top:206px">0 24.05.18</div>
 <svg class="a" style="left:17px;top:221px" width="13" height="16"><path d="M0.5 0.5H8.5L12.5 4.5V15.5H0.5Z" fill="url(#gp)" stroke="#4c5274" stroke-width="1"/><path d="M8.5 0.5V4.5H12.5" fill="none" stroke="#4c5274" stroke-width="1"/></svg><div class="sys a" style="left:33px;top:223px">ZP</div><div class="sys a" style="left:347px;top:223px">0 24.05.18</div>
 <svg class="a" style="left:17px;top:238px" width="13" height="16"><path d="M0.5 0.5H8.5L12.5 4.5V15.5H0.5Z" fill="url(#gp)" stroke="#4c5274" stroke-width="1"/><path d="M8.5 0.5V4.5H12.5" fill="none" stroke="#4c5274" stroke-width="1"/></svg><div class="sys a" style="left:33px;top:240px">ZQ</div><div class="sys a" style="left:347px;top:240px">0 24.05.18</div>
 <svg class="a" style="left:17px;top:255px" width="13" height="16"><path d="M0.5 0.5H8.5L12.5 4.5V15.5H0.5Z" fill="url(#gp)" stroke="#4c5274" stroke-width="1"/><path d="M8.5 0.5V4.5H12.5" fill="none" stroke="#4c5274" stroke-width="1"/></svg><div class="sys a" style="left:33px;top:257px">ZR</div><div class="sys a" style="left:347px;top:257px">0 24.05.18</div>
 <svg class="a" style="left:17px;top:272px" width="13" height="16"><path d="M0.5 0.5H8.5L12.5 4.5V15.5H0.5Z" fill="url(#gp)" stroke="#4c5274" stroke-width="1"/><path d="M8.5 0.5V4.5H12.5" fill="none" stroke="#4c5274" stroke-width="1"/></svg><div class="sys a" style="left:33px;top:274px">ZS</div><div class="sys a" style="left:347px;top:274px">0 24.05.18</div>
 <svg class="a" style="left:17px;top:289px" width="13" height="16"><path d="M0.5 0.5H8.5L12.5 4.5V15.5H0.5Z" fill="url(#gp)" stroke="#4c5274" stroke-width="1"/><path d="M8.5 0.5V4.5H12.5" fill="none" stroke="#4c5274" stroke-width="1"/></svg><div class="sys a" style="left:33px;top:291px">ZT</div><div class="sys a" style="left:347px;top:291px">0 24.05.18</div>
 <svg class="a" style="left:17px;top:306px" width="13" height="16"><path d="M0.5 0.5H8.5L12.5 4.5V15.5H0.5Z" fill="url(#gp)" stroke="#4c5274" stroke-width="1"/><path d="M8.5 0.5V4.5H12.5" fill="none" stroke="#4c5274" stroke-width="1"/></svg><div class="sys a" style="left:33px;top:308px">ZU</div><div class="sys a" style="left:347px;top:308px">0 24.05.18</div>
 <svg class="a" style="left:17px;top:323px" width="13" height="16"><path d="M0.5 0.5H8.5L12.5 4.5V15.5H0.5Z" fill="url(#gp)" stroke="#4c5274" stroke-width="1"/><path d="M8.5 0.5V4.5H12.5" fill="none" stroke="#4c5274" stroke-width="1"/></svg><div class="sys a" style="left:33px;top:325px">ZV</div><div class="sys a" style="left:347px;top:325px">0 24.05.18</div>
 <svg class="a" style="left:17px;top:340px" width="13" height="16"><path d="M0.5 0.5H8.5L12.5 4.5V15.5H0.5Z" fill="url(#gp)" stroke="#4c5274" stroke-width="1"/><path d="M8.5 0.5V4.5H12.5" fill="none" stroke="#4c5274" stroke-width="1"/></svg><div class="sys a" style="left:33px;top:342px">ZW</div><div class="sys a" style="left:347px;top:342px">0 24.05.18</div>
 <svg class="a" style="left:17px;top:357px" width="13" height="16"><path d="M0.5 0.5H8.5L12.5 4.5V15.5H0.5Z" fill="url(#gp)" stroke="#4c5274" stroke-width="1"/><path d="M8.5 0.5V4.5H12.5" fill="none" stroke="#4c5274" stroke-width="1"/></svg><div class="sys a" style="left:33px;top:359px">ZX</div><div class="sys a" style="left:347px;top:359px">0 24.05.18</div>
 <svg class="a" style="left:17px;top:374px" width="13" height="16"><path d="M0.5 0.5H8.5L12.5 4.5V15.5H0.5Z" fill="url(#gp)" stroke="#4c5274" stroke-width="1"/><path d="M8.5 0.5V4.5H12.5" fill="none" stroke="#4c5274" stroke-width="1"/></svg><div class="sys a" style="left:33px;top:376px">ZY</div><div class="sys a" style="left:347px;top:376px">0 24.05.18</div>
 <svg class="a" style="left:17px;top:391px" width="13" height="16"><path d="M0.5 0.5H8.5L12.5 4.5V15.5H0.5Z" fill="url(#gp)" stroke="#4c5274" stroke-width="1"/><path d="M8.5 0.5V4.5H12.5" fill="none" stroke="#4c5274" stroke-width="1"/></svg><div class="sys a" style="left:33px;top:393px">ZZ</div><div class="sys a" style="left:347px;top:393px">0 24.05.18</div>
 <div class="a" style="left:418px;top:69px;width:15px;height:339px;background:#ddd6cf;border-right:1px solid #fff"></div>
 <div class="a" style="left:418px;top:69px;width:14px;height:15px;background:#7282a8"><svg class="a" style="left:3px;top:4px" width="9" height="6"><path d="M0.5 5.5L4.5 1L8.5 5.5" stroke="#e8ecf8" stroke-width="1.2" fill="none"/></svg></div>
 <div class="a" style="left:418px;top:384px;width:14px;height:9px;background:#7282a8"></div>
 <div class="a" style="left:418px;top:394px;width:14px;height:14px;background:#7282a8"><svg class="a" style="left:3px;top:4px" width="9" height="6"><path d="M0.5 0.5L4.5 5L8.5 0.5" stroke="#e8ecf8" stroke-width="1.2" fill="none"/></svg></div>
 <div class="ob a" style="left:297px;top:411px;width:56px;height:17px"><div class="bt a" style="left:12px;top:0px">Open</div></div>
 <div class="ob a" style="left:362px;top:411px;width:56px;height:17px"><div class="bt a" style="left:3px;top:0px">Cancel</div></div>
 <svg class="a" style="left:207px;top:356px" width="13" height="19"><path d="M0.6 0.6V14.8L3.8 11.8L5.9 16.6H7.9L8 15.2L6.4 10.8H10.6Z" fill="#fff" stroke="#000" stroke-width="1.2" stroke-linejoin="miter"/></svg>
</div>
<!-- taskbar -->
<div id="task" class="a">
 <div class="tb" style="left:3px;width:42px;background:#006400"><div class="bt a" style="left:4px;top:3px;color:#fff;font-size:14px;letter-spacing:-0.5px">Menu</div></div>
 <div class="tb" style="left:50px;width:15px;background:#1a84ff"><svg class="a" style="left:3px;top:5px" width="8" height="11"><path d="M4 1V10M1 3.5L4 0.8L7 3.5M1 7.5L4 10.2L7 7.5" stroke="#fff" stroke-width="1.3" fill="none"/></svg></div>
 <div class="tb" style="left:72px;width:73px;background:#68789a"><div class="sys a" style="left:3px;top:4px;color:#eef0f8">OPENDIAL</div></div>
 <div class="tb" style="left:147px;width:73px;background:#7888aa"><div class="sys a" style="left:2px;top:4px;color:#eef0f8">GENFILES</div></div>
 <div class="tb" style="left:222px;width:73px;background:#7888aa"><div class="sys a" style="left:2px;top:4px;color:#eef0f8">FNAV</div></div>
 <div class="tb" style="left:953px;width:18px;background:#1a84ff"><div class="sys a" style="left:1px;top:4px;color:#fff">En</div></div>
 <div class="tb" style="left:973px;width:8px;background:linear-gradient(#006400 0,#006400 80%,#ff0000 80%)"></div>
 <div class="tb" style="left:983px;width:38px;background:#1a84ff"><div class="sys a" style="left:4px;top:4px;color:#fff;letter-spacing:-0.9px">13:16</div></div>
</div>
</body></html>
